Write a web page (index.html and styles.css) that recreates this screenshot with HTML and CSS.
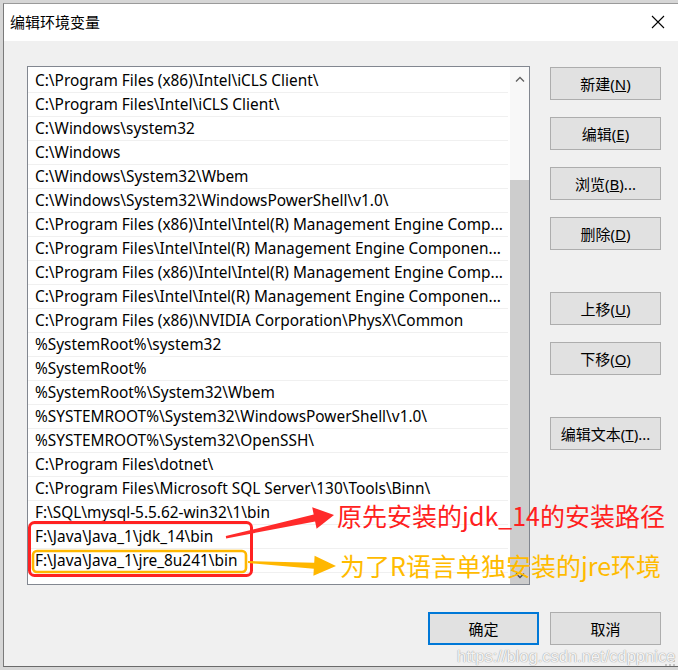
FILE: index.html
```html
<!DOCTYPE html>
<html lang="zh-CN">
<head>
  <meta charset="UTF-8">
  <meta name="viewport" content="width=device-width, initial-scale=1.0">
  <title>编辑环境变量</title>
  <link rel="stylesheet" href="styles.css">
</head>
<body>
  <div class="page">
    <div class="window">
      <div class="titlebar">
        <span class="title">编辑环境变量</span>
        <svg class="close" width="14" height="14" viewBox="0 0 14 14">
          <path d="M1 1 L13 13 M13 1 L1 13" stroke="#000" stroke-width="1.1" fill="none"/>
        </svg>
      </div>

      <div class="content">
        <div class="main">
          <div class="listbox">
            <div class="rows">
              <div class="row">C:\Program Files (x86)\Intel\iCLS Client\</div>
              <div class="row">C:\Program Files\Intel\iCLS Client\</div>
              <div class="row">C:\Windows\system32</div>
              <div class="row">C:\Windows</div>
              <div class="row">C:\Windows\System32\Wbem</div>
              <div class="row">C:\Windows\System32\WindowsPowerShell\v1.0\</div>
              <div class="row">C:\Program Files (x86)\Intel\Intel(R) Management Engine Comp...</div>
              <div class="row">C:\Program Files\Intel\Intel(R) Management Engine Componen...</div>
              <div class="row">C:\Program Files (x86)\Intel\Intel(R) Management Engine Comp...</div>
              <div class="row">C:\Program Files\Intel\Intel(R) Management Engine Componen...</div>
              <div class="row">C:\Program Files (x86)\NVIDIA Corporation\PhysX\Common</div>
              <div class="row">%SystemRoot%\system32</div>
              <div class="row">%SystemRoot%</div>
              <div class="row">%SystemRoot%\System32\Wbem</div>
              <div class="row">%SYSTEMROOT%\System32\WindowsPowerShell\v1.0\</div>
              <div class="row">%SYSTEMROOT%\System32\OpenSSH\</div>
              <div class="row">C:\Program Files\dotnet\</div>
              <div class="row">C:\Program Files\Microsoft SQL Server\130\Tools\Binn\</div>
              <div class="row">F:\SQL\mysql-5.5.62-win32\1\bin</div>
              <div class="row">F:\Java\Java_1\jdk_14\bin</div>
              <div class="row">F:\Java\Java_1\jre_8u241\bin</div>
            </div>
            <div class="scrollbar">
              <div class="sb-arrow">
                <svg width="10" height="6" viewBox="0 0 10 6"><path d="M1 5.5 L5 1.5 L9 5.5" stroke="#606060" stroke-width="1.3" fill="none"/></svg>
              </div>
              <div class="sb-thumb">
                <svg width="10" height="6" viewBox="0 0 10 6"><path d="M1 0.5 L5 4.5 L9 0.5" stroke="#505050" stroke-width="1.3" fill="none"/></svg>
              </div>
            </div>
          </div>

          <div class="side">
            <button class="btn">新建(<u>N</u>)</button>
            <button class="btn">编辑(<u>E</u>)</button>
            <button class="btn">浏览(<u>B</u>)...</button>
            <button class="btn">删除(<u>D</u>)</button>
            <button class="btn group">上移(<u>U</u>)</button>
            <button class="btn">下移(<u>O</u>)</button>
            <button class="btn group">编辑文本(<u>T</u>)...</button>
          </div>
        </div>

        <div class="footer">
          <button class="btn default">确定</button>
          <button class="btn">取消</button>
        </div>
      </div>
    </div>

    <!-- 标注：红框/橙框、箭头和说明文字 -->
    <div class="notes">
      <svg width="678" height="670" viewBox="0 0 678 670">
        <rect x="29.5" y="522.5" width="222" height="53" rx="5" fill="none" stroke="#ff2222" stroke-width="3"/>
        <rect x="33" y="551" width="213" height="21" rx="4" fill="none" stroke="#ffb700" stroke-width="2.6"/>
        <polygon fill="#ff2a2a" points="225.8,536 313.7,514.6 312.2,507.2 334,515 316.6,528.8 315.1,521.4 226.2,538.4"/>
        <polygon fill="#ffb700" points="248,561 314.2,562.8 314.6,555.8 336,566 313.4,575.8 313.8,568.8 248,563"/>
        <g fill="#c4c4c4">
          <rect x="673" y="656" width="2" height="2"/>
          <rect x="669" y="660" width="2" height="2"/>
          <rect x="673" y="660" width="2" height="2"/>
          <rect x="665" y="664" width="2" height="2"/>
          <rect x="669" y="664" width="2" height="2"/>
          <rect x="673" y="664" width="2" height="2"/>
        </g>
      </svg>
      <span class="note red">原先安装的jdk_14的安装路径</span>
      <span class="note orange">为了R语言单独安装的jre环境</span>
      <span class="watermark">https://blog.csdn.net/cdppnice</span>
    </div>
  </div>
</body>
</html>
```

FILE: styles.css
```css
body {
  margin: 0;
  font-family: "Noto Sans", "Noto Sans CJK SC", sans-serif;
  font-size: 15px;
  color: #000;
}
.page {
  position: relative;
  width: 678px;
  height: 670px;
  background-color: #d6d6d6;
  overflow: hidden;
}
.window {
  margin: 3px 0 0 3px;
  height: 662px;
  border-left: 1px solid #7a7a7a;
  border-top: 1px solid #9a9a9a;
  border-bottom: 1px solid #6a6a6a;
  background-color: #f0f0f0;
  display: flex;
  flex-direction: column;
}
.titlebar {
  height: 37px;
  background-color: #fff;
  display: flex;
  align-items: center;
  justify-content: space-between;
  padding: 0 13px 0 6px;
}
.title {
  font-family: "Noto Sans CJK SC", sans-serif;
  font-size: 15px;
  padding-bottom: 2px;
}
.close {
  margin-bottom: 2px;
}
.content {
  padding: 25px 17px 0 23px;
}
.main {
  display: flex;
  gap: 20px;
}
.listbox {
  width: 502px;
  height: 517px;
  border: 1px solid #828790;
  background-color: #fff;
  display: flex;
}
.rows {
  flex: 1;
  margin-right: 2px;
  padding-top: 2px;
}
.row {
  height: 23px;
  line-height: 23px;
  font-size: 15.4px;
  border-bottom: 1px solid #f0f0f0;
  padding-left: 7px;
  white-space: nowrap;
  overflow: hidden;
}
.scrollbar {
  width: 19px;
  background-color: #f8f8f8;
  display: flex;
  flex-direction: column;
  justify-content: space-between;
}
.sb-arrow {
  height: 24px;
  display: flex;
  align-items: center;
  justify-content: center;
}
.sb-thumb {
  height: 404px;
  background-color: #cdcdcd;
  display: flex;
  align-items: flex-end;
  justify-content: center;
  padding-bottom: 5px;
  box-sizing: border-box;
}
.side {
  display: flex;
  flex-direction: column;
  gap: 17px;
  padding-top: 1px;
}
.btn {
  width: 111px;
  height: 33px;
  font-family: "Noto Sans", "Noto Sans CJK SC", sans-serif;
  font-size: 15px;
  background-color: #e1e1e1;
  border: 1px solid #adadad;
  padding: 0;
  color: #000;
}
.btn.group {
  margin-top: 25px;
}
.btn.default {
  border: 2px solid #0078d7;
}
.footer {
  display: flex;
  justify-content: flex-end;
  gap: 11px;
  margin-top: 27px;
}
.notes {
  position: absolute;
  inset: 0;
  pointer-events: none;
}
.notes svg {
  position: absolute;
  left: 0;
  top: 0;
}
.note {
  position: absolute;
  font-family: "Noto Sans CJK SC", sans-serif;
  font-size: 25px;
  line-height: 30px;
  white-space: nowrap;
}
.note.red {
  left: 337px;
  top: 500px;
  color: #ff2020;
}
.note.orange {
  left: 340px;
  top: 550px;
  color: #ffbb00;
}
.watermark {
  position: absolute;
  left: 457px;
  top: 646px;
  font-family: "Liberation Sans", sans-serif;
  font-size: 16.5px;
  line-height: 20px;
  color: rgba(255, 255, 255, 0.9);
  text-shadow: 0 0 1px #a0a0a0, 0 0 1px #a0a0a0;
}
```
